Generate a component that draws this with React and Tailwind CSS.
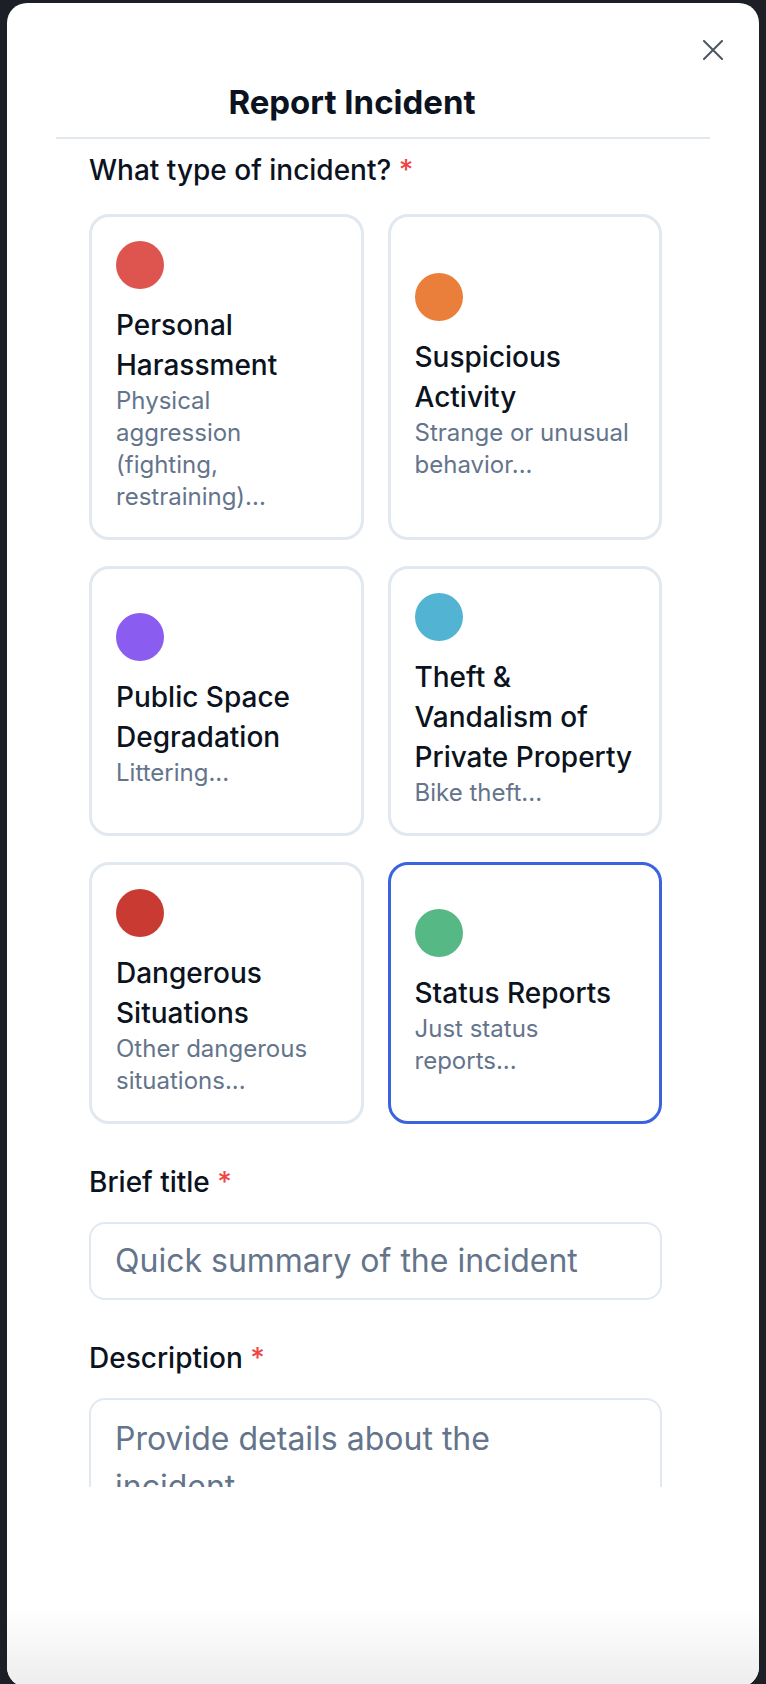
import React from 'react';

const types = [
  { name: 'Personal Harassment', desc: 'Physical aggression (fighting, restraining)...', color: 'bg-[#de5550]' },
  { name: 'Suspicious Activity', desc: 'Strange or unusual behavior...', color: 'bg-[#e97f3a]' },
  { name: 'Public Space Degradation', desc: 'Littering...', color: 'bg-[#8a5cf0]' },
  { name: 'Theft & Vandalism of Private Property', desc: 'Bike theft...', color: 'bg-[#53b3d3]' },
  { name: 'Dangerous Situations', desc: 'Other dangerous situations...', color: 'bg-[#c93b32]' },
  { name: 'Status Reports', desc: 'Just status reports...', color: 'bg-[#55b885]', selected: true },
];

const Label = ({ children }) => (
  <div className="text-[28px] leading-8 font-medium text-[#0b1220]">
    {children} <span className="text-[#ef4444]">*</span>
  </div>
);

const TypeCard = ({ item }) => (
  <button
    className={`flex flex-col justify-center items-start text-left rounded-[20px] border-[3px] p-6 bg-white ${
      item.selected ? 'border-[#3b63e0]' : 'border-[#e2e8f0]'
    }`}
  >
    <span className={`block w-12 h-12 rounded-full mb-4 ${item.color}`} />
    <span className="text-[28px] leading-10 font-medium text-[#0b1220]">{item.name}</span>
    <span className="text-[24px] leading-8 text-[#64748b]">{item.desc}</span>
  </button>
);

export default function App() {
  return (
    <div className="w-[766px] h-[1684px] overflow-hidden bg-[#1c1f26] px-[7px] pt-[3px] font-['Inter',sans-serif]">
      <div className="relative flex flex-col h-[1684px] bg-white rounded-[20px] overflow-hidden">
        {/* close */}
        <button className="absolute right-[36px] top-[37px] w-5 h-5 text-[#4b5563]">
          <svg viewBox="0 0 20 20" width="20" height="20" fill="none" stroke="currentColor" strokeWidth="2" strokeLinecap="round">
            <path d="M1 1L19 19M19 1L1 19" />
          </svg>
        </button>

        {/* header */}
        <div className="pt-[79px] mx-[49px] border-b-2 border-[#e2e8f0] pb-[15px]">
          <h2 className="pr-[62px] text-center text-[33px] leading-10 font-bold text-[#0b1220]">
            Report Incident
          </h2>
        </div>

        {/* scroll body */}
        <div className="h-[1348px] overflow-hidden">
          <div className="ml-[82px] w-[573px] pt-[15px]">
            <Label>What type of incident?</Label>
            <div className="grid grid-cols-2 gap-x-6 gap-y-[26px] mt-[28px]">
              {types.map((t) => (
                <TypeCard key={t.name} item={t} />
              ))}
            </div>

            <div className="mt-[42px]">
              <Label>Brief title</Label>
              <input
                className="mt-6 w-full rounded-[16px] border-2 border-[#e2e8f0] px-6 py-[17px] text-[32px] leading-10 text-[#0b1220] placeholder:text-[#64748b] outline-none"
                placeholder="Quick summary of the incident"
              />
            </div>

            <div className="mt-[42px]">
              <Label>Description</Label>
              <textarea
                rows={4}
                className="mt-6 w-full resize-none rounded-[16px] border-2 border-[#e2e8f0] pl-6 pr-12 py-[15px] text-[32px] leading-12 text-[#0b1220] placeholder:text-[#64748b] outline-none"
                placeholder="Provide details about the incident"
              />
            </div>
          </div>
        </div>

        <div className="flex-1 bg-linear-to-b from-white from-60% to-[#ededed]" />
      </div>
    </div>
  );
}
